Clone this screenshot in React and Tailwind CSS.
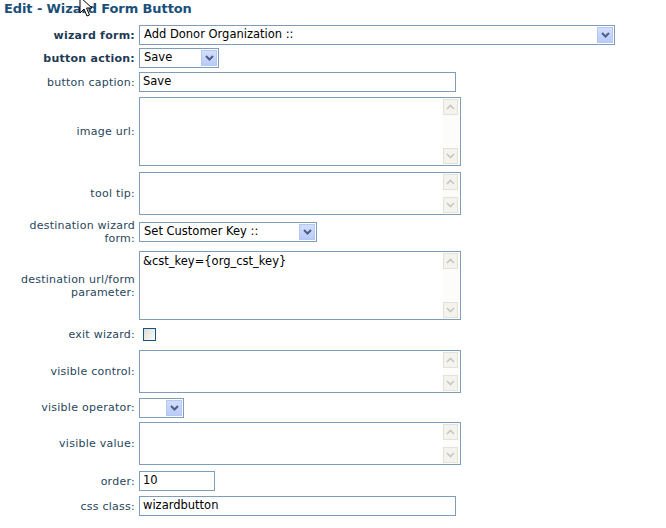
import React from "react";

const FONT = "font-['DejaVu_Sans','Verdana',sans-serif]";

function SelectArrow() {
  return (
    <div className="w-[16px] h-[16px] bg-gradient-to-b from-[#d3defd] to-[#b9cbf8] border border-[#b6c7f1] flex items-center justify-center">
      <svg width="9" height="6" viewBox="0 0 9 6">
        <path d="M1 1 L4.5 4.5 L8 1" fill="none" stroke="#4a5e86" strokeWidth="2" />
      </svg>
    </div>
  );
}

function Select({ w, value }) {
  return (
    <div className={`${w} h-[20px] border border-[#7f9db9] bg-white flex items-center justify-between pl-[4px] pr-[1px] text-[11.5px] text-black`}>
      <span className="whitespace-nowrap overflow-hidden">{value}</span>
      <SelectArrow />
    </div>
  );
}

function Input({ w, value }) {
  return (
    <div className={`${w} h-[20px] border border-[#7f9db9] bg-white flex items-center pl-[3px] text-[11.5px] text-black`}>
      {value}
    </div>
  );
}

function ScrollBtn({ up }) {
  return (
    <div className="w-[15px] h-[16px] bg-[#f4f3ee] border border-[#e3e1d8] flex items-center justify-center">
      <svg width="9" height="6" viewBox="0 0 9 6">
        <path d={up ? "M1 5 L4.5 1.5 L8 5" : "M1 1 L4.5 4.5 L8 1"} fill="none" stroke="#c9c7bd" strokeWidth="1.6" />
      </svg>
    </div>
  );
}

function TextArea({ h, value }) {
  return (
    <div className={`w-[322px] ${h} border border-[#7f9db9] bg-white flex`}>
      <div className="flex-1 pl-[3px] pt-[2px] text-[11.5px] leading-[15px] text-black">{value}</div>
      <div className="w-[17px] bg-[#fcfcfa] flex flex-col justify-between py-[1px] pr-[1px]">
        <ScrollBtn up />
        <ScrollBtn />
      </div>
    </div>
  );
}

function Row({ label, bold, mt, h, children }) {
  return (
    <div className={`flex items-center gap-[4px] ${mt} ${h}`}>
      <div className={`w-[135px] text-right text-[11px] leading-[13px] tracking-[0.25px] ${bold ? "font-bold text-[#1d3a55]" : "text-[#28465c]"}`}>
        {label}
      </div>
      {children}
    </div>
  );
}

export default function App() {
  return (
    <div className={`w-[666px] h-[528px] bg-white relative overflow-hidden ${FONT}`}>
      <div className="h-[25px] pl-[4px] pt-[1px] text-[13px] leading-[15px] font-bold text-[#1a4f7a] tracking-[-0.1px]">
        Edit - Wizard Form Button
      </div>
      <div className="flex flex-col">
        <Row label="wizard form:" bold mt="mt-0" h="h-[20px]">
          <Select w="w-[476px]" value="Add Donor Organization ::" />
        </Row>
        <Row label="button action:" bold mt="mt-[3px]" h="h-[20px]">
          <Select w="w-[80px]" value="Save" />
        </Row>
        <Row label="button caption:" mt="mt-[4px]" h="h-[20px]">
          <Input w="w-[317px]" value="Save" />
        </Row>
        <Row label="image url:" mt="mt-[5px]" h="h-[69px]">
          <TextArea h="h-[69px]" value="" />
        </Row>
        <Row label="tool tip:" mt="mt-[6px]" h="h-[43px]">
          <TextArea h="h-[43px]" value="" />
        </Row>
        <Row label={<>destination wizard<br />form:</>} mt="mt-[4px]" h="h-[26px]">
          <Select w="w-[178px]" value="Set Customer Key ::" />
        </Row>
        <Row label={<>destination url/form<br />parameter:</>} mt="mt-[6px]" h="h-[69px]">
          <TextArea h="h-[69px]" value="&cst_key={org_cst_key}" />
        </Row>
        <Row label="exit wizard:" mt="mt-[8px]" h="h-[13px]">
          <div className="ml-[4px] w-[13px] h-[13px] border border-[#1c5180] bg-gradient-to-br from-[#dcdcd7] to-[#fbfbf9]" />
        </Row>
        <Row label="visible control:" mt="mt-[9px]" h="h-[43px]">
          <TextArea h="h-[43px]" value="" />
        </Row>
        <Row label="visible operator:" mt="mt-[5px]" h="h-[19px]">
          <Select w="w-[45px]" value="" />
        </Row>
        <Row label="visible value:" mt="mt-[5px]" h="h-[43px]">
          <TextArea h="h-[43px]" value="" />
        </Row>
        <Row label="order:" mt="mt-[6px]" h="h-[20px]">
          <Input w="w-[76px]" value="10" />
        </Row>
        <Row label="css class:" mt="mt-[5px]" h="h-[20px]">
          <Input w="w-[317px]" value="wizardbutton" />
        </Row>
      </div>
      <svg className="absolute left-[79px] top-[-4px]" width="14" height="22" viewBox="0 0 14 22">
        <path d="M1 1 L1 17 L5 13 L8 20 L10.5 19 L7.5 12 L13 12 Z" fill="white" stroke="black" strokeWidth="1" strokeLinejoin="miter" />
      </svg>
    </div>
  );
}
